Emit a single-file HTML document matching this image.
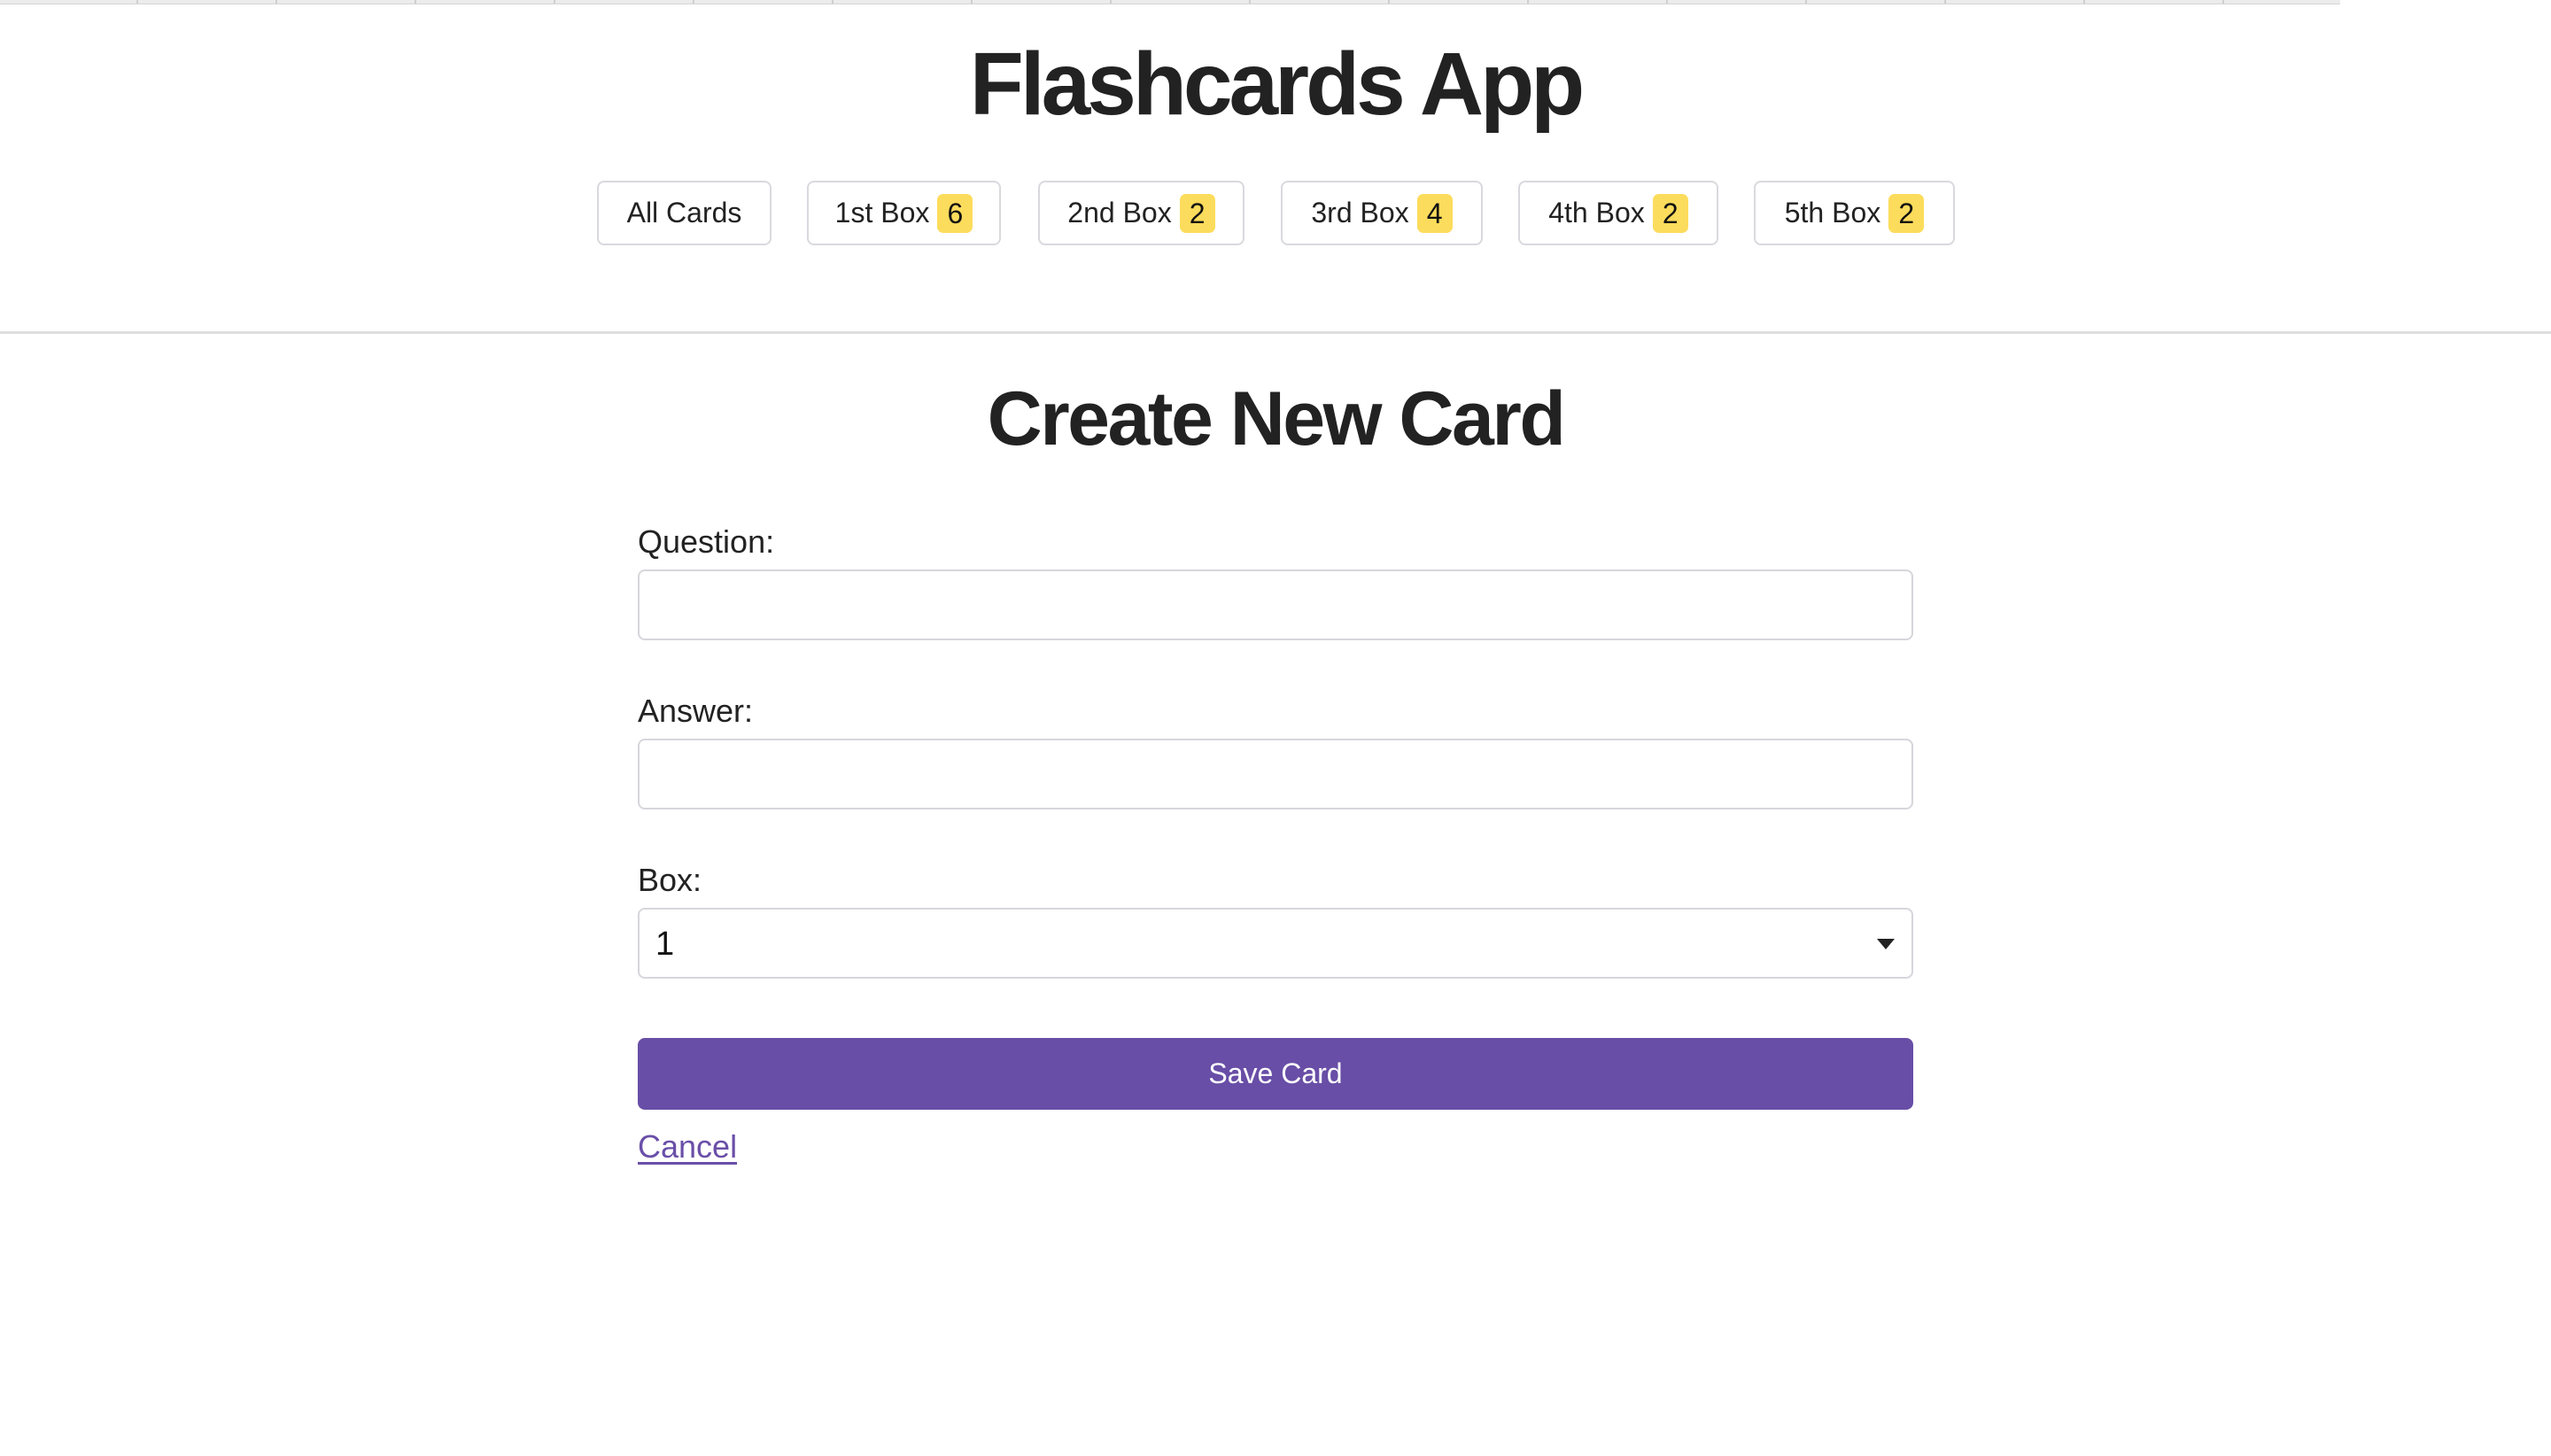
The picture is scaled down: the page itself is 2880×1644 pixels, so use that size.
<!DOCTYPE html>
<html><head><meta charset="utf-8"><style>
*{margin:0;padding:0;box-sizing:border-box}
html,body{width:2880px;height:1644px;background:#fff;overflow:hidden;font-family:"Liberation Sans",sans-serif;color:#222}
.strip{position:absolute;left:0;top:0;width:2642px;height:5px;background:#ececec;border-bottom:1px solid #d4d4d4;
background-image:repeating-linear-gradient(to right,transparent 0,transparent 155px,#cfcfcf 155px,#cfcfcf 157px);background-position:-1px 0}
.t{position:absolute;left:0;width:2880px;text-align:center;font-weight:bold;white-space:nowrap}
.btn{position:absolute;top:204px;height:73px;border:2px solid #d9d9de;border-radius:8px;background:#fff;font-size:32px;display:flex;align-items:center;justify-content:center;color:#222}
.badge{display:inline-block;background:#fcdc5c;border-radius:7px;width:40px;height:44px;line-height:44px;text-align:center;margin-left:9px;color:#111}
.hr{position:absolute;left:0;top:374px;width:2880px;height:3px;background:#dedede}
.lbl{position:absolute;left:720px;font-size:36px;color:#222}
.inp{position:absolute;left:720px;width:1440px;height:80px;border:2px solid #d6d6dc;border-radius:8px;background:#fff}
</style></head><body>
<div class="strip"></div>
<div class="t" style="top:38px;font-size:100px;letter-spacing:-4px">Flashcards App</div>
<div class="btn" style="left:674px;width:197px">All Cards</div>
<div class="btn" style="left:911px;width:219px">1st Box<span class="badge">6</span></div>
<div class="btn" style="left:1172px;width:233px">2nd Box<span class="badge">2</span></div>
<div class="btn" style="left:1446px;width:228px">3rd Box<span class="badge">4</span></div>
<div class="btn" style="left:1714px;width:226px">4th Box<span class="badge">2</span></div>
<div class="btn" style="left:1980px;width:227px">5th Box<span class="badge">2</span></div>
<div class="hr"></div>
<div class="t" style="top:424px;font-size:86px;letter-spacing:-2.5px">Create New Card</div>
<div class="lbl" style="top:591px">Question:</div>
<div class="inp" style="top:643px"></div>
<div class="lbl" style="top:782px">Answer:</div>
<div class="inp" style="top:834px"></div>
<div class="lbl" style="top:973px">Box:</div>
<div class="inp" style="top:1025px"><span style="position:absolute;left:18px;top:18px;font-size:38px;color:#111">1</span>
<svg style="position:absolute;right:18px;top:32px" width="22" height="14" viewBox="0 0 22 14"><path d="M1 1h20L11 13z" fill="#222"/></svg></div>
<div style="position:absolute;left:720px;top:1172px;width:1440px;height:81px;background:#684ea6;border-radius:8px;color:#fff;font-size:32px;display:flex;align-items:center;justify-content:center">Save Card</div>
<div style="position:absolute;left:720px;top:1274px;font-size:36px;color:#6a4fa8;text-decoration:underline;text-underline-offset:5px">Cancel</div>
</body></html>
